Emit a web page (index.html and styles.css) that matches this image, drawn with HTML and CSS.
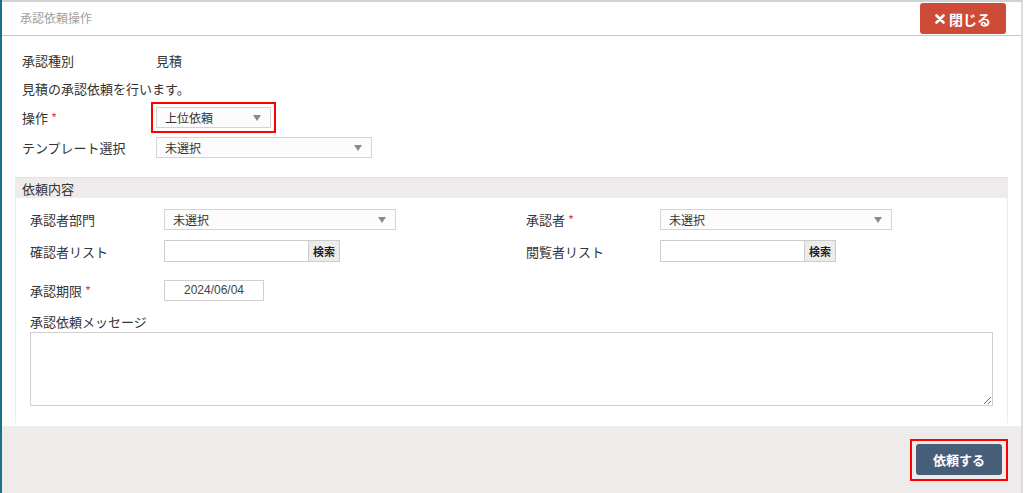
FILE: index.html
```html
<!DOCTYPE html>
<html lang="ja">
<head>
    <meta charset="UTF-8">
    <title>承認依頼操作</title>
    <link rel="stylesheet" href="styles.css">
</head>
<body>
<div class="page">
    <div class="dialog">
        <div class="dialog-header">
            <span class="dialog-title">承認依頼操作</span>
            <button class="close-btn" type="button">
                <svg width="10" height="10" viewBox="0 0 10 10"><path d="M1.5 1.5 L8.5 8.5 M8.5 1.5 L1.5 8.5" stroke="#fff" stroke-width="2.6" stroke-linecap="round"/></svg>
                閉じる
            </button>
        </div>

        <div class="dialog-body">
            <div class="row">
                <div class="label">承認種別</div>
                <div class="value">見積</div>
            </div>
            <div class="row">
                <div class="note">見積の承認依頼を行います。</div>
            </div>
            <div class="row row-tall">
                <div class="label">操作 <span class="req">*</span></div>
                <div class="select select-op marked">上位依頼<span class="caret"></span></div>
            </div>
            <div class="row row-tall">
                <div class="label">テンプレート選択</div>
                <div class="select select-tpl">未選択<span class="caret"></span></div>
            </div>

            <div class="section">
                <div class="section-head">依頼内容</div>
                <div class="section-body">
                    <div class="pair-row">
                        <div class="field">
                            <div class="flabel">承認者部門</div>
                            <div class="select select-wide">未選択<span class="caret"></span></div>
                        </div>
                        <div class="field">
                            <div class="flabel">承認者 <span class="req">*</span></div>
                            <div class="select select-wide">未選択<span class="caret"></span></div>
                        </div>
                    </div>
                    <div class="pair-row">
                        <div class="field">
                            <div class="flabel">確認者リスト</div>
                            <div class="search-box">
                                <input class="text-input" type="text">
                                <button class="search-btn" type="button">検索</button>
                            </div>
                        </div>
                        <div class="field">
                            <div class="flabel">閲覧者リスト</div>
                            <div class="search-box">
                                <input class="text-input" type="text">
                                <button class="search-btn" type="button">検索</button>
                            </div>
                        </div>
                    </div>
                    <div class="pair-row row-date">
                        <div class="field">
                            <div class="flabel">承認期限 <span class="req">*</span></div>
                            <input class="date-input" type="text" value="2024/06/04">
                        </div>
                    </div>
                    <div class="msg-label">承認依頼メッセージ</div>
                    <textarea class="message"></textarea>
                </div>
            </div>
        </div>

        <div class="dialog-footer">
            <div class="submit-mark">
                <button class="submit-btn" type="button">依頼する</button>
            </div>
        </div>
    </div>
</div>
</body>
</html>
```

FILE: styles.css
```css
html, body {
    margin: 0;
    padding: 0;
    background-color: #fff;
}

body {
    font-family: "Noto Sans CJK JP", "Noto Sans", sans-serif;
    font-size: 13px;
    color: #333;
    width: 1024px;
    height: 493px;
    overflow: hidden;
}

.page {
    border-left: 2px solid #1c7187;
    height: 493px;
    box-sizing: border-box;
}

.dialog {
    width: 1021px;
    height: 493px;
    box-sizing: border-box;
    border-top: 2px solid #d2d2d2;
    border-right: 2px solid #dcdcdc;
    display: flex;
    flex-direction: column;
}

/* header */
.dialog-header {
    height: 34px;
    box-sizing: border-box;
    border-bottom: 1px solid #c6c6c6;
    display: flex;
    align-items: flex-start;
    justify-content: space-between;
    padding: 1px 15px 0 18px;
}

.dialog-title {
    font-size: 12px;
    color: #a0a0a0;
    line-height: 30px;
}

.close-btn {
    width: 86px;
    height: 31px;
    border: none;
    border-radius: 3px;
    background-color: #cd4b37;
    color: #fff;
    font-family: inherit;
    font-size: 14px;
    font-weight: bold;
    display: flex;
    align-items: center;
    justify-content: center;
    gap: 4px;
    padding: 0;
}

/* upper form */
.dialog-body {
    flex: 1;
    padding: 10px 13px 0 13px;
}

.row {
    display: flex;
    align-items: center;
    height: 28px;
    padding-left: 7px;
}

.row-tall {
    height: 30px;
}

.label {
    width: 134px;
}

.req {
    color: #e0434b;
}

.select {
    position: relative;
    height: 21px;
    box-sizing: border-box;
    border: 1px solid #d4d4d4;
    background-color: #fcfcfc;
    line-height: 19px;
    padding-left: 8px;
    font-size: 12px;
    color: #333;
}

.caret {
    position: absolute;
    right: 9px;
    top: 7px;
    width: 0;
    height: 0;
    border-left: 4px solid transparent;
    border-right: 4px solid transparent;
    border-top: 6px solid #8a8a8a;
}

.select-op {
    width: 115px;
}

.select-tpl {
    width: 216px;
}

.marked {
    outline: 2px solid #f00;
    outline-offset: 3px;
}

/* 依頼内容 */
.section {
    margin-top: 15px;
}

.section-head {
    height: 21px;
    line-height: 21px;
    background-color: #eeebea;
    padding-left: 7px;
    border-top: 1px solid #e4e2e1;
    box-sizing: border-box;
}

.section-body {
    border-left: 1px solid #ececec;
    border-right: 1px solid #ececec;
    padding: 5px 13px 17px 14px;
}

.pair-row {
    display: flex;
    height: 32px;
    align-items: center;
}

.row-date {
    margin-top: 7px;
}

.field {
    width: 496px;
    flex-shrink: 0;
    display: flex;
    align-items: center;
}

.flabel {
    width: 134px;
}

.select-wide {
    width: 232px;
}

.search-box {
    display: flex;
    align-items: center;
}

.text-input {
    width: 145px;
    height: 22px;
    box-sizing: border-box;
    border: 1px solid #ccc;
    margin: 0;
    padding: 0;
}

.search-btn {
    height: 22px;
    padding: 0 4px;
    border: 1px solid #ccc;
    border-left: none;
    background-color: #eeeceb;
    font-family: inherit;
    font-size: 11px;
    font-weight: bold;
    color: #222;
}

.date-input {
    width: 100px;
    height: 21px;
    box-sizing: border-box;
    border: 1px solid #d0d0d0;
    margin: 0;
    padding: 0;
    text-align: center;
    font-family: "Liberation Sans", sans-serif;
    font-size: 12px;
    color: #444;
}

.msg-label {
    margin-top: 5px;
    height: 21px;
    line-height: 21px;
}

.message {
    display: block;
    width: 963px;
    height: 74px;
    box-sizing: border-box;
    border: 1px solid #cfcfcf;
    margin: 0;
    resize: vertical;
}

/* footer */
.dialog-footer {
    height: 67px;
    flex-shrink: 0;
    background-color: #eeebea;
    display: flex;
    justify-content: flex-end;
    align-items: flex-start;
    padding: 13px 13px 0 0;
    box-sizing: border-box;
}

.submit-mark {
    border: 2px solid #f00;
    padding: 3px 4px 4px 4px;
    display: flex;
}

.submit-btn {
    width: 86px;
    height: 31px;
    border: none;
    border-radius: 3px;
    background-color: #475e78;
    color: #fff;
    font-family: inherit;
    font-size: 13px;
    font-weight: bold;
}
```
